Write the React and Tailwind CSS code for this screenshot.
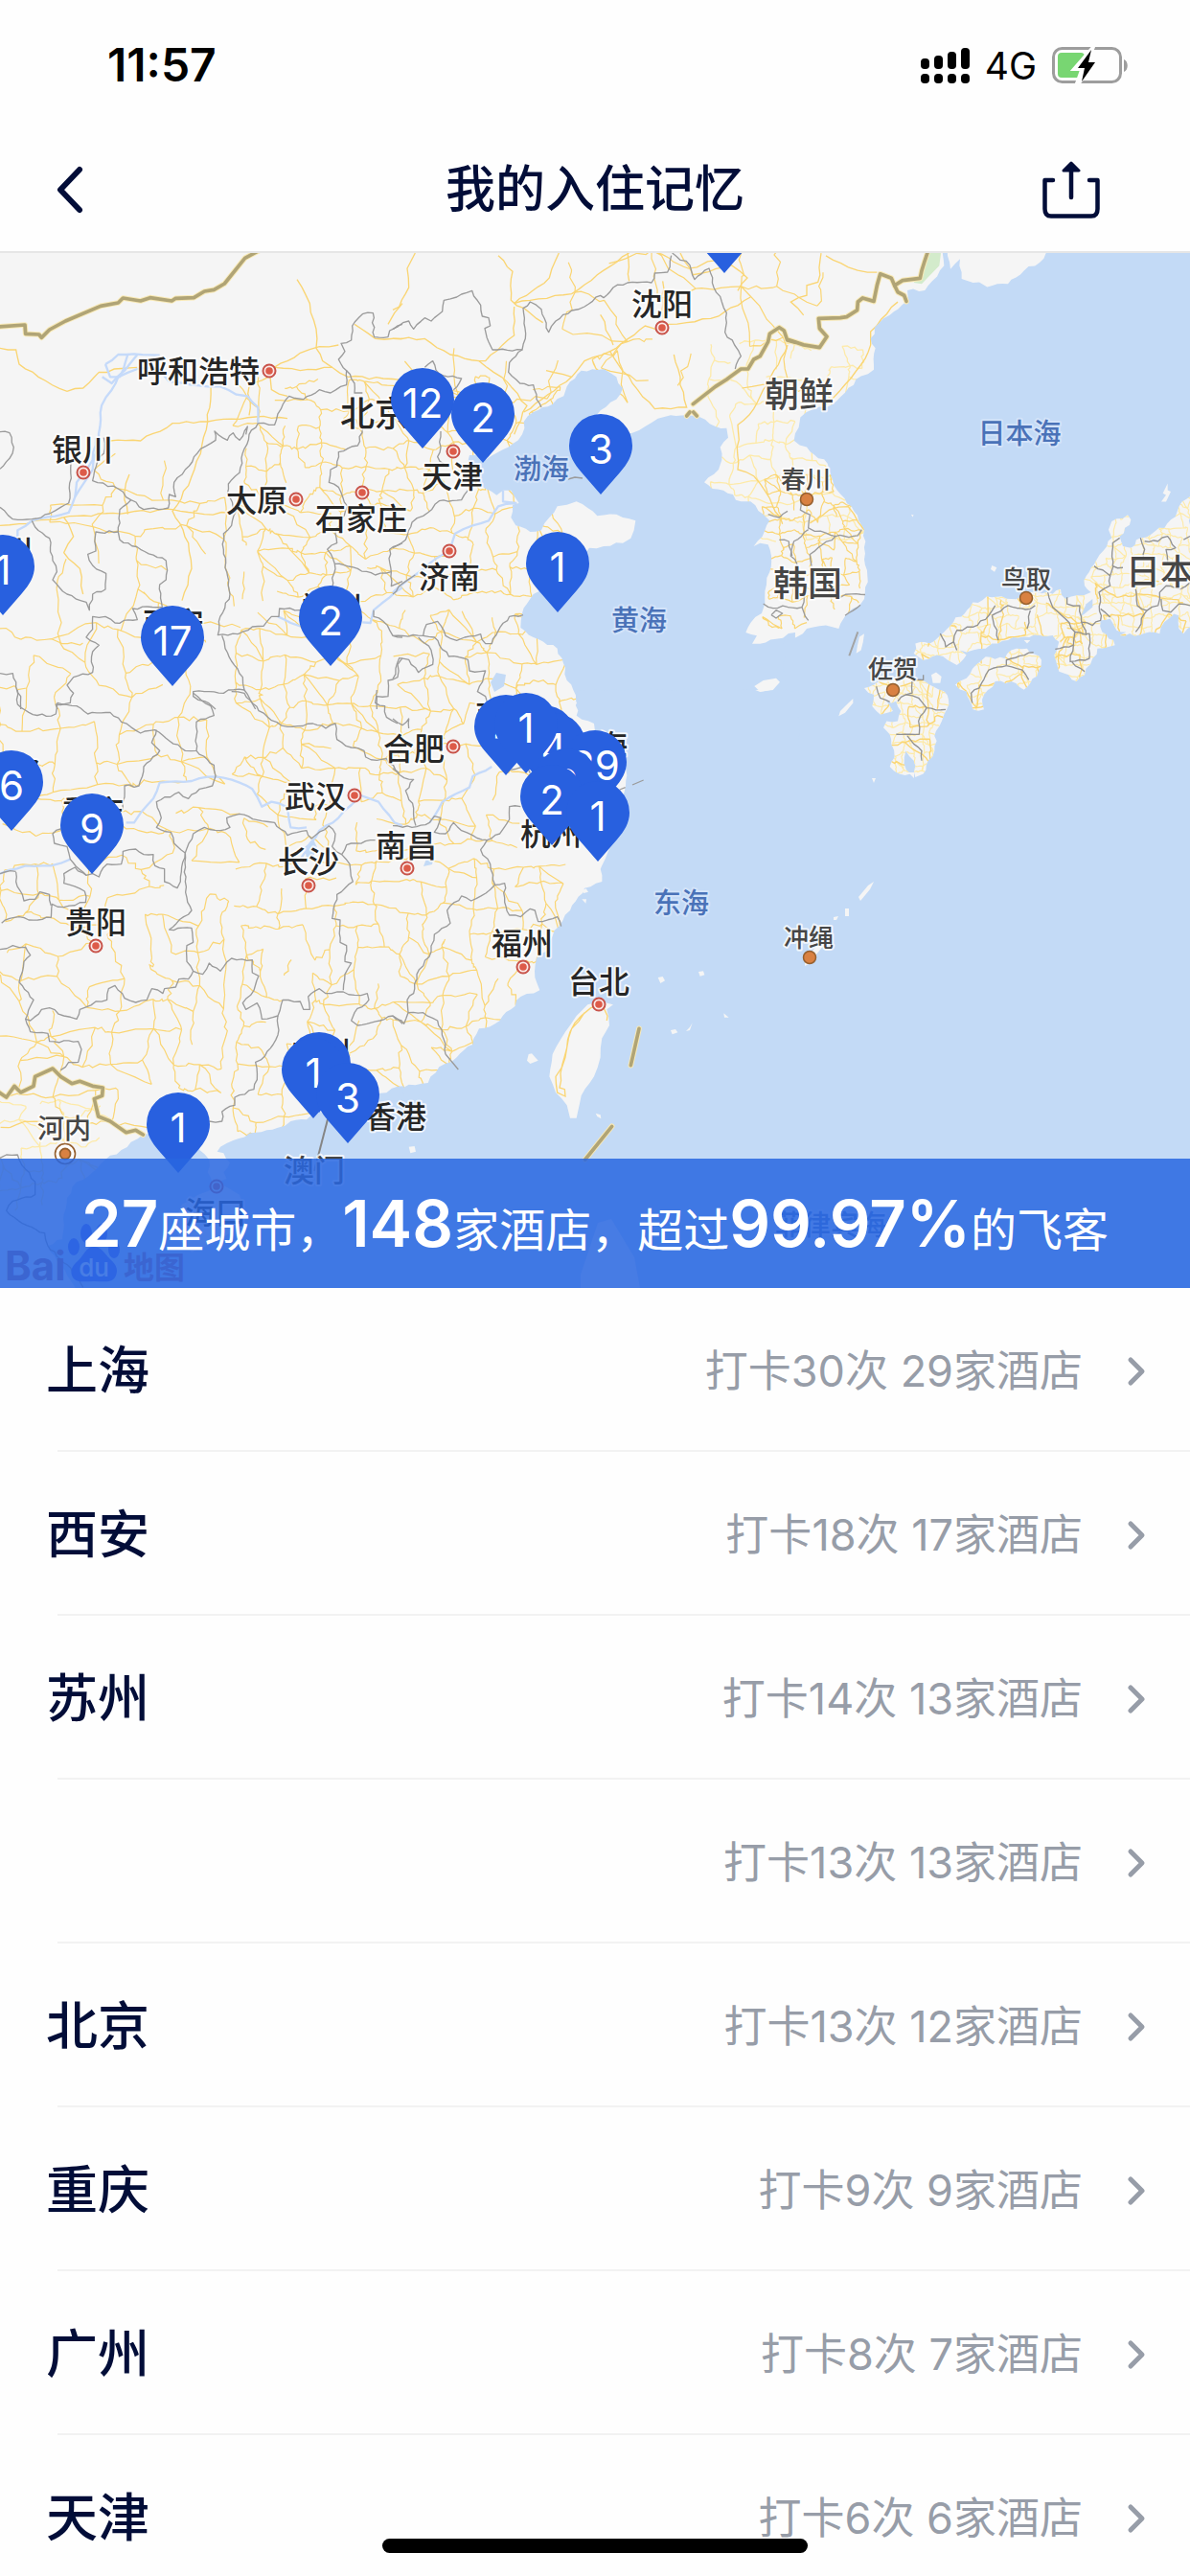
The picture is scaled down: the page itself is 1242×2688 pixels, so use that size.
import React from "react";

/* ---------- geometry helpers ---------- */

function createRandom(seed) {
  let s = seed;
  return () => {
    s = (s * 1664525 + 1013904223) % 4294967296;
    return s / 4294967296;
  };
}

function parsePoints(text) {
  return text.split(" ").map((pair) => pair.split(",").map(Number));
}

function toPath(points, closed) {
  return (
    "M" + points.map(([x, y]) => `${x.toFixed(1)} ${y.toFixed(1)}`).join("L") + (closed ? "Z" : "")
  );
}

/* Splits long segments and nudges the new points sideways, so lines look surveyed. */
function rough(text, amp, closed = false, step = 22) {
  const base = parsePoints(text);
  const points = closed ? [...base, base[0]] : base;
  const random = createRandom(Math.round(points[0][0] * 7 + points[0][1] * 13 + points.length));
  const out = [points[0]];
  for (let i = 1; i < points.length; i += 1) {
    const [x0, y0] = points[i - 1];
    const [x1, y1] = points[i];
    const length = Math.hypot(x1 - x0, y1 - y0);
    const count = Math.max(1, Math.floor(length / step));
    for (let k = 1; k < count; k += 1) {
      const t = k / count;
      const d = (random() - 0.5) * 2 * amp;
      out.push([
        x0 + (x1 - x0) * t - ((y1 - y0) / length) * d,
        y0 + (y1 - y0) * t + ((x1 - x0) / length) * d,
      ]);
    }
    out.push([x1, y1]);
  }
  return toPath(out, closed);
}

/* Irregular road mesh over a rectangle. */
function roadMesh(x, y, w, h, gap, chance, seed) {
  const random = createRandom(seed);
  const cols = Math.floor(w / gap) + 1;
  const rows = Math.floor(h / gap) + 1;
  const nodes = [];
  for (let r = 0; r < rows; r += 1) {
    nodes.push([]);
    for (let c = 0; c < cols; c += 1) {
      nodes[r].push([
        x + c * gap + (random() - 0.5) * gap * 0.7,
        y + r * gap + (random() - 0.5) * gap * 0.7,
      ]);
    }
  }
  const join = (a, b) => {
    const pts = [a];
    for (let k = 1; k < 5; k += 1) {
      const t = k / 5;
      pts.push([
        a[0] + (b[0] - a[0]) * t + (random() - 0.5) * gap * 0.16,
        a[1] + (b[1] - a[1]) * t + (random() - 0.5) * gap * 0.16,
      ]);
    }
    pts.push(b);
    return toPath(pts, false);
  };
  let d = "";
  for (let r = 0; r < rows; r += 1) {
    for (let c = 0; c < cols; c += 1) {
      if (c + 1 < cols && random() < chance) d += join(nodes[r][c], nodes[r][c + 1]);
      if (r + 1 < rows && random() < chance) d += join(nodes[r][c], nodes[r + 1][c]);
      if (r + 1 < rows && c + 1 < cols && random() < chance * 0.2)
        d += join(nodes[r][c], nodes[r + 1][c + 1]);
    }
  }
  return d;
}

/* ---------- map sheets: each has its own survey grid ---------- */

const NW = "translate(0 260) scale(0.33333)";
const NE = "translate(410 260) scale(0.33333)";
const EAST = "translate(822 260) scale(0.33333 0.34435)";
const SW = "translate(0 720) scale(0.33333)";
const SE = "translate(410 720) scale(0.33333)";

const SEA = "#c3daf6";
const LAND = "#f5f5f5";

const roads = [
  roadMesh(250, 400, 350, 240, 22, 0.72, 11),
  roadMesh(250, 640, 370, 260, 24, 0.72, 21),
  roadMesh(0, 660, 250, 190, 32, 0.68, 31),
  roadMesh(0, 840, 250, 330, 30, 0.66, 41),
  roadMesh(250, 900, 350, 330, 24, 0.7, 51),
  roadMesh(60, 480, 190, 180, 36, 0.6, 61),
  roadMesh(430, 370, 320, 90, 46, 0.42, 71),
  roadMesh(600, 270, 260, 150, 42, 0.55, 81),
  roadMesh(800, 500, 100, 160, 14, 0.6, 91),
].join("");

const paleRoads = [
  roadMesh(745, 360, 160, 200, 20, 0.6, 101),
  roadMesh(0, 1150, 130, 110, 22, 0.65, 111),
].join("");

const handRoads = {
  [NW]: [
    "0,310 50,315 60,360 120,400 210,445 260,435 310,385 430,370",
    "930,95 970,170 990,250 990,310 1010,350 1040,370",
    "840,380 900,350 940,325 1000,305 1060,300",
    "860,370 940,380 1040,370 1090,400 1200,405 1260,410",
    "345,600 440,600 540,545 650,540 800,525 900,530",
    "660,430 650,540 628,640 590,740 540,820 590,920 600,1000 570,1100",
    "405,705 390,760 400,830",
    "0,865 60,860 240,835 400,825 540,815 640,830 720,825",
    "845,390 850,440 900,460",
    "780,520 780,430 840,400",
    "200,840 230,900 200,950 250,1000 260,1080",
    "1110,235 1175,280 1260,280",
    "1215,235 1235,200 1260,170",
  ],
  [NE]: [
    "520,12 490,90 380,170",
    "70,12 45,60 50,120 20,180 0,190",
    "330,20 375,70 370,160 430,200 470,230",
    "380,170 430,160 560,140 640,80 740,12",
    "735,12 740,100",
    "845,100 845,240",
    "0,280 100,280 180,330 270,350 290,350 380,270 380,180",
    "270,350 340,400 420,490 380,580",
    "410,510 560,400 600,350 680,320 790,240 840,260",
    "680,320 750,420 820,500 920,495 880,330",
    "650,205 690,300",
    "480,380 560,400",
    "860,235 920,230 1020,210 1120,150",
    "900,12 940,80 1060,50 1110,90 1080,130",
    "1236,300 1130,500 1080,550 1080,690 1130,710 1180,780 1220,860",
  ],
  [EAST]: [
    "105,12 95,100 60,110 60,140 10,160 50,200",
    "120,20 190,55 250,70 280,70",
    "345,160 260,250 260,290 230,350 180,410 120,470",
    "70,830 130,790 190,780 240,850",
  ],
};

const rivers = {
  [NW]: [
    "55,900 55,880 100,850 150,838 215,825 235,775 290,690 310,600 318,490 350,440 370,400 430,375 500,375 530,415 600,425 650,430 690,430 740,455 775,460 808,495 808,545",
    "330,360 370,330 420,328 500,332",
    "330,360 345,400 375,400 400,330",
    "320,400 350,420 390,380 430,330",
    "300,590 290,660 240,730 235,775",
    "1260,1060 1220,1090 1170,1130 1160,1170 1135,1168",
    "870,1150 910,1170 940,1180",
  ],
  [NE]: ["345,755 345,790 385,795 330,805 300,850 250,865 195,890 180,940 120,980 70,1020 0,1075"],
  [SW]: [
    "395,415 420,415 440,385 480,340 500,290 600,285 650,272 700,275 750,290 790,310 820,365 850,350 895,365 910,430 960,430",
    "920,560 960,500 1000,440 1060,400 1100,360 1130,330 1185,350 1235,415 1260,425",
    "0,575 80,550 160,550 220,530",
  ],
  [SE]: ["115,415 130,395 155,350 240,305 250,270 310,240"],
};

const borders = {
  [NW]: [
    "0,572 30,575 43,620 30,655 0,688",
    "0,808 40,845 100,845 155,828 190,808 215,795 222,670",
    "325,590 325,640 305,665 290,725 370,750 410,785 450,815 527,810 530,768 550,775 545,730 580,690 628,625 675,598 672,570 712,598 730,575 750,598 775,555 770,580",
    "808,545 860,550 880,500 905,460 950,470 1000,440 1035,450 1085,425 1085,380 1060,345 1080,320 1068,295 1100,285 1103,240 1135,203 1168,200 1172,275 1215,275 1220,255 1260,235",
    "1085,380 1110,420 1110,450 1135,450",
    "1135,560 1120,615 1060,635 1055,680 1035,690 1030,730 1060,745 1088,805 1050,890 1055,920 1025,940 1048,985 1120,1000 1175,1020 1225,1010 1220,940 1260,920",
    "1048,985 1040,1060",
    "1225,1010 1225,1055 1260,1040",
    "100,850 110,870 155,905 165,975 178,1010 165,1035 210,1080 270,1105 280,1130 290,1080 330,1065 332,1015 290,990 275,955 300,945 300,885 370,885",
    "410,785 375,815 370,885 375,910 440,940 520,975 520,1035 500,1050 508,1120 415,1125 430,1160 360,1170 330,1150 290,1150 290,1190 270,1215 310,1240 290,1260 290,1325 230,1340 210,1365 230,1390 220,1420 175,1425 180,1440",
    "695,1210 705,1250 725,1290 760,1340 765,1380 715,1380 700,1390 640,1385 605,1385 605,1400 640,1415 675,1440",
    "765,1380 800,1440",
    "0,1328 40,1328 50,1370 65,1400 65,1440",
    "1170,1130 1170,1150 1200,1165 1230,1210 1260,1215",
    "1260,1280 1245,1300 1245,1340 1215,1350 1215,1400 1180,1400 1180,1440",
    "808,545 780,580 765,625 750,700 715,735 712,765 740,820 725,865 700,890 700,940 710,1010 720,1080 685,1165 682,1208 745,1205 790,1182 825,1180 850,1150 873,1150 875,1125 940,1130",
  ],
  [NE]: [
    "0,250 50,225 65,250 100,215 120,225 155,195 160,160 200,150 248,130 275,175 280,210 300,215 305,240 288,248 300,290 312,315 405,315 415,280 408,185 430,165 465,188 488,260 510,225 560,192 600,180 650,145 660,152 690,120 735,105 810,105 820,75 860,72 872,20",
    "875,12 930,50 945,95 990,60 1005,120 1030,165 1045,200 1040,260 1070,300 1090,335 1072,375",
    "405,315 365,355 362,385 398,420 440,425 450,470 465,495",
    "100,370 125,350 145,390 215,405 190,440",
    "150,570 150,620 140,650 170,685",
    "235,755 215,785 145,788 95,835 60,855 40,910 0,935",
    "0,1080 40,1040 70,1020",
    "408,1145 365,1150 330,1195 310,1235 290,1235 275,1205 225,1215 200,1225 165,1210 140,1165 105,1175 95,1210 0,1210",
    "95,1210 130,1215 175,1275 235,1285 240,1320 290,1320 265,1385 290,1400 300,1440",
    "80,1215 120,1255 125,1300 80,1325 50,1285 20,1280 0,1345",
    "1210,910 1240,915 1250,960",
    "1160,1110 1175,1120 1236,1120",
    "1185,1145 1200,1130 1220,1140 1200,1155 1185,1145",
    "1175,830 1210,840 1236,820",
  ],
  [EAST]: [
    "40,760 40,790 70,805 65,845 85,855 120,860 150,870 220,868 232,850",
    "150,870 95,905 70,925 75,960",
    "65,850 20,885 10,930 30,955",
    "165,1055 200,1045 243,1047",
    "0,1085 45,1085 65,1125",
    "45,1085 60,1020",
    "228,1078 180,1110",
  ],
  [SW]: [
    "55,0 55,45 90,70 145,82 175,75 180,40 240,50 275,75 345,70 380,100 440,135 485,125 580,190 615,190 615,100 670,80 660,50 605,10",
    "725,5 765,10 810,65 850,95 900,115 980,105 1020,120 1050,105 1055,155 1100,180 1140,190 1145,210 1180,220 1210,215 1250,260",
    "1180,0 1175,40 1205,50 1210,85 1245,105",
    "490,125 475,165 500,190 450,240 435,300 390,300 390,335 385,375",
    "615,190 670,235 675,270 665,300 625,310 590,340 560,320 490,350 505,400 490,430 535,445 545,480 580,510 565,600 555,620 515,600 515,560 485,550 480,515 450,515 425,498 385,505 380,545 335,545 310,585 290,575 270,580 235,555 200,575 200,605 265,630 268,665 200,680 163,670 160,712 90,720 60,710 30,715 5,730",
    "50,570 50,600 70,640 75,660 110,655 125,632 155,640 160,675",
    "190,435 165,450 170,480 210,490 220,530 270,580",
    "580,510 605,450 640,430 690,440 720,430 710,400 750,388 820,410 860,415 900,455 960,440 975,465 1030,425 1050,450 1040,490 1070,515 1095,545 1105,600 1055,640 1040,715 1065,720 1065,790 1085,800 1080,850 1100,855 1080,890 1075,940",
    "1070,515 1085,485 1175,470",
    "580,510 580,600 585,650 600,690 575,710 530,750 600,745 605,790 585,800 585,850 605,880 635,890 655,855 690,880 725,840 790,845 790,885 810,895 795,940 760,980 770,1000 805,980 820,1030 870,1020 885,970 940,975 950,1000 970,1000 965,960 1000,935 1020,950 1075,945 1110,955 1150,950 1155,970 1110,1010 1100,1035 1120,1050 1190,1035 1230,1020 1260,1045",
    "605,880 590,905 560,905 550,930 515,935 510,950 475,935 460,970 425,978 390,965 360,925 340,935 335,970 300,975 250,1000 240,1030 200,1020 155,995 130,1000 95,1035 80,1030 95,990 105,970 60,915 75,850 95,830 80,805 40,800 0,812",
    "80,1030 95,1070 150,1075 155,1100 245,1100 255,1125 245,1165 215,1165 190,1190",
    "870,1020 870,1080 855,1110 830,1145 800,1165 805,1220 795,1250 735,1275 735,1300 695,1320 695,1350 655,1350",
    "0,575 15,570 50,568",
    "0,1465 20,1455 55,1455 80,1500 110,1540 110,1580 40,1600 20,1630 70,1670 140,1700 150,1740 240,1830 260,1870",
  ],
  [SE]: [
    "0,245 35,275 65,280 40,315 65,370 72,425",
    "0,425 60,430 115,415 130,395 150,400 130,445 165,450 190,415 215,440 250,455 295,470 335,450 365,405 365,365 400,365",
    "295,470 275,500 305,545 320,610 350,605 350,650 365,705 400,710 430,685 445,690 455,725 515,710 527,740",
    "320,610 305,625 245,660 215,645 170,690 180,730 130,765 120,820 75,890 65,950 45,970 48,1010 95,1010 140,1035 160,1095 165,1140",
    "48,1010 35,1045 0,1020",
    "0,90 30,110 50,90 50,120",
    "370,250 420,240 430,260",
  ],
};

const seas = {
  [NE]: [
    "920,520 960,525 1010,555 1045,560 1050,590 1025,620 1030,660 1020,690 975,730 1000,750 1035,755 1090,790 1120,790 1160,830 1180,850 1165,880 1130,930 1150,920 1175,925 1185,960 1180,1010 1170,1050 1165,1110 1155,1140 1120,1170 1105,1200 1140,1210 1125,1235 1150,1235 1200,1220 1260,1200 1260,1450 585,1450 565,1380 545,1350 540,1310 515,1250 440,1215 400,1185 405,1140 420,1110 440,1080 500,1060 560,980 615,935 660,930 720,920 745,905 755,880 760,850 720,840 700,830 640,835 610,810 575,790 545,800 515,805 490,840 465,880 430,885 385,865 370,840 375,800 395,795 370,755 345,755 325,770 290,750 270,725 270,690 235,665 240,645 290,660 330,635 375,610 405,580 410,540 440,510 500,485 535,460 545,430 570,405 590,380 660,375 700,400 720,435 700,470 650,505 620,540 640,590 700,600 750,575 790,555 830,530 870,520",
  ],
  [EAST]: [
    "485,0 490,50 440,110 430,125 375,125 370,160 320,200 285,225 260,270 275,300 270,365 230,385 180,435 120,480 80,485 40,510 35,540 20,580 60,600 125,650 155,730 200,780 240,850 240,940 250,990 240,1060 225,1080 185,1105 160,1150 120,1140 60,1150 30,1175 -10,1185 -10,1600 1270,1600 1270,0 820,0 790,40 740,65 690,105 625,115 600,100 545,90 540,30 510,60 500,0",
  ],
  [SE]: [
    "580,0 575,80 630,105 640,150 730,250 720,400 690,480 650,560 655,600 600,620 555,690 520,740 500,770 490,810 450,840 445,900 460,940 400,960 370,1000 320,1045 270,1060 250,1110 200,1150 145,1180 110,1230 50,1235 0,1255 0,1880 1270,1880 1270,0",
  ],
  [SW]: [
    "1265,1240 1190,1262 1130,1300 1060,1340 1000,1320 960,1345 910,1350 870,1370 800,1385 730,1410 690,1430 680,1445 700,1450 720,1480 700,1510 710,1530 665,1545 650,1510 655,1470 625,1440 620,1400 560,1380 450,1390 410,1415 380,1440 330,1470 290,1510 240,1540 210,1590 200,1640 195,1720 150,1740 180,1790 240,1880 1265,1880",
  ],
};

const islands = {
  [NE]: ["1132,1368 1160,1350 1200,1343 1212,1355 1190,1380 1150,1385"],
  [EAST]: [
    "1190,710 1175,740 1185,745 1170,765 1185,765 1200,735 1190,730",
    "240,1165 225,1175 215,1225 230,1215",
    "205,1362 165,1400 160,1415 180,1405 205,1375",
    "640,958 655,965 648,978 636,970",
    "387,804 395,806 391,812",
    "450,1290 465,1282 482,1295 478,1315 455,1315",
    "740,1185 760,1185 750,1195",
  ],
  [SE]: [
    "690,985 670,1000 678,1050 655,1090 650,1150 630,1210 590,1270 575,1340 555,1340 545,1300 510,1260 490,1210 500,1140 540,1070 575,1020 610,985 650,975",
    "830,900 845,897 852,910 838,918",
    "957,882 972,880 976,892 962,896",
    "870,1065 885,1062 892,1072 875,1078",
    "918,1068 930,1055 938,1042 930,1065",
    "1036,1012 1052,1025 1038,1025",
    "425,1140 435,1138 455,1160 430,1170 420,1160",
    "50,1430 68,1428 72,1445 55,1450",
    "635,1325 650,1330 652,1342 640,1335",
    "590,628 605,622 612,632 598,636",
    "592,655 606,655 604,668",
    "1135,0 1180,0 1150,6",
  ],
  [SW]: [
    "570,1610 620,1580 700,1550 750,1580 765,1640 720,1700 650,1740 600,1760 560,1720 545,1660",
  ],
};

const honshu =
  "1260,750 1235,765 1220,795 1180,845 1150,855 1105,875 1075,905 1050,900 1040,870 1075,820 1065,805 1015,825 1005,850 1015,875 1000,900 960,955 935,990 930,1020 950,1040 925,1050 870,1060 855,1030 830,1045 780,1040 700,1060 640,1055 580,1070 500,1150 445,1195 400,1195 395,1225 425,1245 470,1230 530,1260 560,1230 540,1215 580,1215 620,1210 640,1195 690,1185 740,1175 790,1170 830,1170 850,1190 835,1230 850,1280 905,1310 930,1290 955,1240 970,1210 1025,1200 1020,1185 985,1160 980,1125 1010,1120 1030,1155 1060,1160 1040,1170 1165,1165 1180,1130 1210,1105 1225,1110 1225,1150 1240,1165 1265,1140";
const shikoku =
  "525,1320 560,1300 590,1260 620,1235 680,1240 700,1215 750,1210 795,1245 785,1280 740,1335 700,1310 650,1310 615,1350 615,1395 580,1395 560,1340";
const kyushu =
  "240,1330 270,1320 300,1310 340,1300 380,1290 400,1305 430,1310 455,1325 490,1340 505,1380 490,1410 465,1460 460,1520 440,1550 425,1590 400,1600 395,1550 370,1520 365,1560 385,1590 350,1590 320,1568 335,1540 325,1500 320,1470 300,1450 310,1430 345,1430 355,1400 340,1370 310,1370 330,1400 290,1410 265,1385 270,1350";

const japanPath = [honshu, shikoku, kyushu].map((p) => rough(p, 6, true, 14)).join("");

const japanBorders = [
  "1040,875 1018,890 1018,960 1050,965",
  "960,960 1010,990 1020,960",
  "1010,990 1010,1020 975,1040 980,1125 955,1140 920,1130 915,1080 875,1075 875,1055",
  "980,1090 1010,1115",
  "1105,875 1118,910 1115,940",
  "1118,885 1160,885 1190,870 1215,905 1185,910 1190,950",
  "1240,880 1260,870",
  "1090,1030 1095,1080 1125,1095 1160,1080 1165,1040 1185,1020 1230,1030 1260,1010",
  "1170,1060 1175,1095 1200,1100 1225,1075 1260,1080",
  "1125,1095 1090,1160",
  "640,1110 660,1185",
  "650,1080 630,1110 580,1145 530,1155 520,1190 530,1215",
  "520,1190 495,1205 478,1165",
  "640,1110 690,1080 760,1090 775,1080",
  "760,1095 750,1150",
  "815,1040 830,1085 870,1120 900,1160 895,1200 838,1212",
  "900,1160 945,1165 945,1240 885,1250 895,1200",
  "920,1130 935,1170",
  "890,1250 930,1280",
  "685,1262 685,1245 770,1222",
  "685,1262 630,1275 600,1330 575,1345 578,1375",
  "685,1262 735,1275 755,1305",
  "278,1325 290,1360 320,1372",
  "345,1370 370,1350 410,1360 435,1390 495,1395",
  "425,1290 425,1305 390,1310 390,1345 370,1350",
  "435,1390 410,1430 412,1470 340,1470",
  "375,1475 420,1520 420,1550",
];

const frontiers = {
  [NW]: [
    "-5,243 78,237 80,265 122,267 130,277 155,252 205,225 315,178 370,168 385,153 440,162 470,152 538,162 550,154 607,152 640,132 670,127 703,108 767,28 810,5",
  ],
  [NE]: [
    "940,485 1010,430 1045,408 1090,375 1112,375 1130,345 1150,335 1175,290 1180,265 1210,245 1225,255 1235,285 1260,292",
    "930,510 920,522",
    "941,510 952,522",
  ],
  [EAST]: [
    "5,275 50,290 100,298 123,265 100,240 97,210 165,208 185,205 218,185 220,160 235,148 270,158 280,110 290,75 325,88 335,110 360,95 415,88 420,65 428,40 440,5",
    "335,110 345,130 365,140 372,158",
  ],
  [SW]: [
    "-5,1258 20,1275 45,1240 65,1260 105,1240 110,1210 165,1185 190,1210 225,1232 250,1225 290,1240 322,1245 320,1270 295,1280 308,1335 345,1350 395,1385 425,1378 448,1392",
  ],
  [SE]: ["771,1060 745,1175", "686,1366 602,1470"],
};

/* ---------- labels and markers ---------- */

const INK = "#262626";
const SOFT = "#464646";
const MARINE = "#4a72b8";

const labels = [
  ["呼和浩特", 207, 387, 32, INK],
  ["银川", 86, 469, 32, INK],
  ["太原", 268, 522, 32, INK],
  ["石家庄", 377, 541, 32, INK],
  ["北京", 391, 431, 36, INK],
  ["天津", 472, 497, 32, INK],
  ["济南", 469, 602, 32, INK],
  ["沈阳", 691, 317, 32, INK],
  ["郑州", 346, 634, 32, INK],
  ["西安", 181, 650, 32, INK],
  ["兰州", 2, 575, 32, INK],
  ["成都", 9, 806, 32, INK],
  ["重庆", 97, 846, 32, INK],
  ["贵阳", 100, 962, 32, INK],
  ["武汉", 329, 831, 32, INK],
  ["长沙", 322, 899, 32, INK],
  ["南昌", 424, 882, 32, INK],
  ["合肥", 432, 781, 32, INK],
  ["南京", 528, 746, 32, INK],
  ["上海", 623, 778, 32, INK],
  ["杭州", 575, 870, 32, INK],
  ["福州", 545, 984, 32, INK],
  ["台北", 625, 1024, 32, INK],
  ["香港", 413, 1165, 32, INK],
  ["广州", 334, 1098, 32, INK],
  ["澳门", 328, 1221, 32, SOFT],
  ["海口", 225, 1265, 32, INK],
  ["朝鲜", 834, 411, 36, SOFT],
  ["韩国", 843, 608, 36, SOFT],
  ["日本", 1211, 596, 36, SOFT],
  ["春川", 841, 500, 26, SOFT],
  ["鸟取", 1071, 604, 26, SOFT],
  ["佐贺", 932, 698, 26, SOFT],
  ["冲绳", 844, 978, 26, SOFT],
  ["河内", 67, 1177, 28, SOFT],
  ["渤海", 565, 489, 29, MARINE],
  ["黄海", 667, 647, 29, MARINE],
  ["东海", 711, 942, 29, MARINE],
  ["日本海", 1064, 452, 29, MARINE],
  ["菲律宾海", 867, 1278, 29, MARINE],
];

const capitals = [
  [281, 387], [87, 493], [309, 521], [378, 514], [473, 471], [469, 575], [691, 342], [473, 779],
  [370, 830], [322, 924], [425, 906], [546, 1009], [625, 1048], [100, 987], [226, 1238],
];

const towns = [[842, 521], [1071, 624], [932, 720], [845, 999]];

/* Tip position on the map, in order of stacking. */
const pins = [
  { x: 756, y: 285, count: "2", city: "长春" },
  { x: 441, y: 468, count: "12", city: "北京" },
  { x: 504, y: 483, count: "2", city: "天津" },
  { x: 627, y: 516, count: "3", city: "大连" },
  { x: 582, y: 639, count: "1", city: "青岛" },
  { x: 3, y: 642, count: "1", city: "兰州" },
  { x: 180, y: 716, count: "17", city: "西安" },
  { x: 345, y: 695, count: "2", city: "郑州" },
  { x: 12, y: 867, count: "6", city: "成都" },
  { x: 96, y: 912, count: "9", city: "重庆" },
  { x: 528, y: 809, count: "4", city: "南京" },
  { x: 568, y: 820, count: "", city: "无锡" },
  { x: 578, y: 828, count: "4", city: "苏州" },
  { x: 549, y: 807, count: "1", city: "镇江" },
  { x: 621, y: 846, count: "29", city: "上海" },
  { x: 591, y: 865, count: "2", city: "嘉兴" },
  { x: 576, y: 882, count: "2", city: "杭州" },
  { x: 624, y: 899, count: "1", city: "宁波" },
  { x: 333, y: 1161, count: "", city: "广州" },
  { x: 327, y: 1167, count: "1", city: "佛山" },
  { x: 363, y: 1193, count: "3", city: "深圳" },
  { x: 186, y: 1224, count: "1", city: "北海" },
];

const cities = [
  { name: "上海", checkins: 30, hotels: 29 },
  { name: "西安", checkins: 18, hotels: 17 },
  { name: "苏州", checkins: 14, hotels: 13 },
  { name: "", checkins: 13, hotels: 13 },
  { name: "北京", checkins: 13, hotels: 12 },
  { name: "重庆", checkins: 9, hotels: 9 },
  { name: "广州", checkins: 8, hotels: 7 },
  { name: "天津", checkins: 6, hotels: 6 },
];

/* ---------- components ---------- */

function Sheets({ data, render }) {
  return Object.entries(data).map(([transform, lines]) => (
    <g key={transform} transform={transform}>
      {lines.map((line, i) => (
        <path key={i} d={render(line)} />
      ))}
    </g>
  ));
}

function MapCanvas() {
  return (
    <svg viewBox="0 264 1242 1080" className="block size-full" aria-hidden="true">
      <rect x="0" y="264" width="1242" height="1080" fill={LAND} />

      <g fill="none" stroke="#fdeaa9" strokeWidth="1.3">
        <path d={paleRoads} />
      </g>
      <g fill="none" stroke="#fad573" strokeWidth="1.2">
        <path d={roads} />
      </g>
      <g fill="none" stroke="#fad573" strokeWidth="4">
        <Sheets data={handRoads} render={(l) => rough(l, 4)} />
      </g>

      <g fill={SEA}>
        <Sheets data={seas} render={(l) => rough(l, 5, true, 16)} />
        <rect x="815" y="780" width="427" height="564" />
        <path d="M730 925l8 -8 -4 16zM445 896l8 -4 -2 10 -9 2zM318 884l9 -8 4 8 -6 14 -5 -2zM512 712l6 -10 10 2 -2 12 -10 6z" />
      </g>

      <path
        transform={EAST}
        fill="#d3ebcb"
        d="M445 5L480 12 475 50 440 85 420 105 395 102 425 60Z"
      />

      <g fill={LAND}>
        <Sheets data={islands} render={(l) => rough(l, 2, true)} />
        <path d="M896 936l10 -12 6 -4 -4 8 -10 12zM882 948l4 0 0 8 -4 0zM870 957l5 -1 -2 4 -3 0zM848 992l8 -8 4 2 -16 20 -4 2 0 -6zM910 812l4 0 -2 5zM948 806l6 0 0 6zM606 1330l18 -54 14 -4 24 40 6 32 -62 0z" />
      </g>

      <g transform={SE} fill="none" stroke="#fad573" strokeWidth="4">
        <path
          d={rough(
            "650,985 620,995 590,1020 555,1070 545,1120 530,1180 510,1210 515,1260 540,1272 538,1250 522,1245 525,1200 545,1120 560,1060 600,1010",
            4,
          )}
        />
        <path d={rough("660,995 672,1020 670,1035", 2)} />
      </g>

      <clipPath id="japan">
        <path d={japanPath} />
      </clipPath>
      <g transform={EAST}>
        <path d={japanPath} fill={LAND} />
        <g clipPath="url(#japan)" fill="none">
          <path d={roadMesh(240, 750, 1020, 850, 30, 0.75, 7)} stroke="#fdeaa9" strokeWidth="3.5" />
          <path d={roadMesh(240, 1000, 1020, 600, 62, 0.5, 17)} stroke="#fad573" strokeWidth="4" />
          <path d={roadMesh(860, 1130, 80, 80, 22, 0.6, 27)} stroke="#fad573" strokeWidth="4" />
        </g>
        <path d="M935 1075L955 1060 955 1085 930 1105 918 1112Z" fill={SEA} />
        <g fill="none" stroke="#929292" strokeWidth="4" strokeLinejoin="round">
          {japanBorders.map((line) => (
            <path key={line} d={rough(line, 4, false, 14)} />
          ))}
        </g>
        <path d="M220 1160L193 1232" stroke="#a3a3a3" strokeWidth="6" />
      </g>

      <g fill="none" stroke="#c5dafa" strokeWidth="7" strokeLinejoin="round">
        <Sheets data={rivers} render={(l) => rough(l, 3)} />
      </g>
      <g fill="none" stroke="#9b9b9b" strokeWidth="4" strokeLinejoin="round">
        <Sheets data={borders} render={(l) => rough(l, 4, false, 14)} />
        <g transform={SE}>
          <path d="M165 1140L205 1188M710 312L728 305M750 297L785 282" />
        </g>
        <path d="M593 500L600 498 608 499" strokeWidth="1.5" />
        <path d="M342 1168L328 1222" strokeWidth="2" stroke="#858585" />
      </g>

      <g fill="none" stroke="#f8e9b6" strokeWidth="17" strokeLinejoin="round" strokeLinecap="round">
        <Sheets data={frontiers} render={(l) => toPath(parsePoints(l), false)} />
      </g>
      <g fill="none" stroke="#b0a476" strokeWidth="11" strokeLinejoin="round" strokeLinecap="round">
        <Sheets data={frontiers} render={(l) => toPath(parsePoints(l), false)} />
      </g>

      {capitals.map(([x, y]) => (
        <g key={`${x}-${y}`}>
          <circle cx={x} cy={y} r="6.5" fill="#fbeae8" stroke="#c8534a" strokeWidth="2" />
          <circle cx={x} cy={y} r="3.8" fill="#dd5b49" />
        </g>
      ))}
      {towns.map(([x, y]) => (
        <circle key={x} cx={x} cy={y} r="6.5" fill="#d98142" stroke="#96602f" strokeWidth="1.5" />
      ))}
      <circle cx="68" cy="1204" r="10.5" fill="#ffffff" stroke="#96602f" strokeWidth="1.6" />
      <circle cx="68" cy="1204" r="5.5" fill="#d98142" stroke="#96602f" strokeWidth="1.8" />

      <g
        textAnchor="middle"
        strokeOpacity="0.75"
        strokeWidth="4"
        strokeLinejoin="round"
        paintOrder="stroke"
      >
        {labels.map(([text, x, y, size, fill]) => (
          <text
            key={text}
            x={x}
            y={y + Math.round(size * 0.38)}
            fontSize={size}
            fill={fill}
            className="font-medium"
            stroke={fill === MARINE ? "#d9e7fa" : "#ffffff"}
          >
            {text}
          </text>
        ))}
      </g>

      <g>
        <text x="5" y="1336" fontSize="42" fill="#a8607c" className="font-bold">
          Bai
        </text>
        <g fill="#4a62f0">
          <ellipse cx="77" cy="1301" rx="6" ry="9" />
          <ellipse cx="90" cy="1287" rx="6" ry="10" />
          <ellipse cx="106" cy="1287" rx="6" ry="10" />
          <ellipse cx="119" cy="1304" rx="6" ry="9" />
          <path d="M98 1301c8 0 11 7 17 13 7 6 9 12 5 19 -4 6 -13 4 -22 4s-18 2 -22 -4c-4 -7 0 -13 6 -18 6 -6 8 -14 16 -14z" />
        </g>
        <text x="98" y="1332" fontSize="26" fill="#ffffff" textAnchor="middle" className="font-medium">
          du
        </text>
        <text x="129" y="1334" fontSize="32" fill="#a8607c" className="font-bold">
          地图
        </text>
      </g>
    </svg>
  );
}

function Pin({ pin }) {
  return (
    <button
      type="button"
      aria-label={`${pin.city} ${pin.count}`}
      className="absolute flex h-[84px] w-[66px] -translate-x-1/2 -translate-y-full justify-center text-[42px] leading-[74px] text-white"
      style={{ left: `${(pin.x / 1242) * 100}%`, top: `${((pin.y - 264) / 1080) * 100}%` }}
    >
      <svg viewBox="0 0 66 84" className="absolute inset-0 size-full" aria-hidden="true">
        <path
          d="M33 84L13 61C5 52 0 43 0 33A33 33 0 0 1 66 33C66 43 61 52 53 61Z"
          fill="#2860df"
        />
      </svg>
      <span className="relative">{pin.count}</span>
    </button>
  );
}

function StatusBar() {
  return (
    <div className="flex h-[132px] items-center justify-between pt-1 pr-16 pl-28 text-black">
      <time className="text-[48px] leading-none font-semibold">11:57</time>
      <div className="flex items-center gap-4">
        <svg viewBox="0 0 51 37" className="h-[37px] w-[51px]" aria-hidden="true">
          <rect x="0" y="11" width="9" height="11" rx="4" />
          <rect x="14" y="8" width="9" height="14" rx="4" />
          <rect x="28" y="4" width="9" height="18" rx="4" />
          <rect x="42" y="0" width="9" height="22" rx="4" />
          <rect x="0" y="27" width="9" height="10" rx="4" />
          <rect x="14" y="27" width="9" height="10" rx="4" />
          <rect x="28" y="27" width="9" height="10" rx="4" />
          <rect x="42" y="27" width="9" height="10" rx="4" />
        </svg>
        <span className="text-[39px] leading-none">4G</span>
        <svg viewBox="0 0 80 38" className="h-[38px] w-[80px]" aria-hidden="true">
          <rect x="1.5" y="1.5" width="70" height="35" rx="9" fill="none" stroke="#9d9d9d" strokeWidth="3" />
          <rect x="6" y="6" width="28" height="26" rx="4" fill="#78d672" />
          <path d="M75 13c5 2 5 11 0 13z" fill="#9d9d9d" />
          <path
            d="M42 0L21 24H30L25 38H29L46 15H38L44 0Z"
            fill="#ffffff"
            stroke="#ffffff"
            strokeWidth="2"
          />
          <path d="M41 3L27 22H34L31 36L45 16H38Z" />
        </svg>
      </div>
    </div>
  );
}

function NavBar() {
  return (
    <header className="grid h-[132px] grid-cols-[1fr_auto_1fr] items-center border-b-2 border-[#e6e6e6] px-[54px] pt-0.5 text-[#020d38]">
      <button type="button" aria-label="返回" className="justify-self-start">
        <svg viewBox="0 0 36 52" className="h-[52px] w-9" fill="none" aria-hidden="true">
          <path
            d="M29 5L9 26L29 47"
            stroke="currentColor"
            strokeWidth="6"
            strokeLinecap="round"
            strokeLinejoin="round"
          />
        </svg>
      </button>
      <h1 className="text-[52px] leading-none font-medium">我的入住记忆</h1>
      <button type="button" aria-label="分享" className="mr-10 justify-self-end">
        <svg viewBox="0 0 60 60" className="size-[60px]" fill="none" aria-hidden="true">
          <path
            d="M11 20H2.500V50Q2.500 57.500 9 57.500H51Q57.500 57.500 57.500 50V20H49"
            stroke="currentColor"
            strokeWidth="4.500"
            strokeLinecap="round"
            strokeLinejoin="round"
          />
          <path d="M30 8V38" stroke="currentColor" strokeWidth="4.500" strokeLinecap="round" />
          <path
            d="M30 2L38 10H22Z"
            fill="currentColor"
            stroke="currentColor"
            strokeWidth="3"
            strokeLinejoin="round"
          />
        </svg>
      </button>
    </header>
  );
}

function Summary() {
  return (
    <p className="absolute inset-x-0 bottom-0 flex h-[135px] items-center justify-center bg-[rgba(40,102,224,0.85)] text-[48px] leading-none whitespace-nowrap text-white">
      <span>
        <b className="text-[67px] font-semibold">27</b>座城市，
        <b className="text-[67px] font-semibold">148</b>家酒店，超过
        <b className="text-[67px] font-semibold">99.97%</b>的飞客
      </span>
    </p>
  );
}

function CityRow({ city }) {
  return (
    <li className="ml-[60px] border-b-2 border-[#f2f2f2]">
      <a href="#" className="-ml-3 flex h-[169px] items-center pt-1 pr-11">
        <span className="text-[54px] leading-none font-medium text-[#020d38]">{city.name}</span>
        <span className="ml-auto text-[45px] leading-none text-[#979da8]">
          打卡{city.checkins}次 {city.hotels}家酒店
        </span>
        <svg viewBox="0 0 22 34" className="ml-[46px] h-[34px] w-[22px]" fill="none" aria-hidden="true">
          <path d="M4 5L16 17L4 29" stroke="#979da8" strokeWidth="5" strokeLinecap="round" strokeLinejoin="round" />
        </svg>
      </a>
    </li>
  );
}

export default function App() {
  return (
    <div className="relative flex h-screen flex-col overflow-hidden bg-[#fefefe] font-['Inter','Noto_Sans_CJK_SC',sans-serif]">
      <StatusBar />
      <NavBar />
      <section aria-label="入住地图" className="relative aspect-[1242/1080] w-full shrink-0 overflow-hidden">
        <MapCanvas />
        {pins.map((pin) => (
          <Pin key={pin.city} pin={pin} />
        ))}
        <Summary />
      </section>
      <ul className="min-h-0 flex-1 overflow-y-auto [scrollbar-width:none]">
        {cities.map((city, i) => (
          <CityRow key={i} city={city} />
        ))}
      </ul>
      <div className="absolute bottom-6 left-1/2 h-[15px] w-[444px] -translate-x-1/2 rounded-full bg-black" />
    </div>
  );
}
